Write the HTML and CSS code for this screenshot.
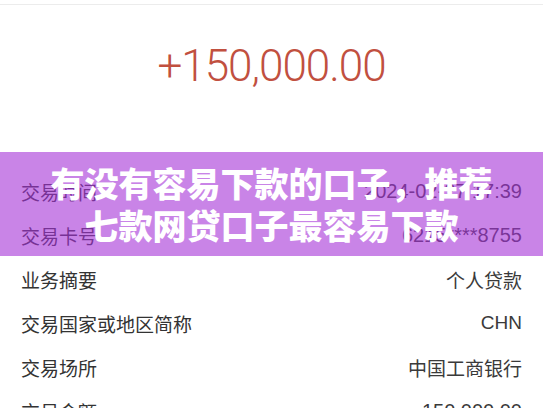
FILE: index.html
```html
<!DOCTYPE html>
<html lang="zh-CN">
<head>
<meta charset="UTF-8">
<meta name="viewport" content="width=device-width, initial-scale=1.0">
<title>交易详情</title>
<link rel="stylesheet" href="styles.css">
</head>
<body>
<div class="page">
  <div class="topbar"></div>

  <div class="amount-box">
    <div class="amount">+150,000.00</div>
  </div>

  <!-- detail rows -->
  <ul class="details">
    <li class="row"><span class="label">交易时间</span><span class="value num">2024-02-27 17:39</span></li>
    <li class="row"><span class="label">交易卡号</span><span class="value num">6215****8755</span></li>
    <li class="row"><span class="label">业务摘要</span><span class="value">个人贷款</span></li>
    <li class="row"><span class="label">交易国家或地区简称</span><span class="value">CHN</span></li>
    <li class="row"><span class="label">交易场所</span><span class="value">中国工商银行</span></li>
    <li class="row"><span class="label">交易金额</span><span class="value num">150,000.00</span></li>
  </ul>

  <div class="banner">
    <h1>有没有容易下款的口子，推荐<br>七款网贷口子最容易下款</h1>
  </div>
</div>
</body>
</html>
```

FILE: styles.css
```css
body {
  margin: 0;
  padding: 0;
  background: #fff;
  color: #333;
  font-family: "Liberation Sans", "Noto Sans CJK SC", sans-serif;
  overflow: hidden;
}
.page {
  position: relative;
  height: 408px;
  overflow: hidden;
}
.topbar {
  height: 4px;
  border-bottom: 1px solid #ececec;
}
.amount-box {
  height: 164px;
  box-sizing: border-box;
  padding-top: 35px;
  text-align: center;
}
.amount {
  font-family: Roboto, "Liberation Sans", sans-serif;
  font-weight: 300;
  font-size: 44px;
  line-height: 52px;
  letter-spacing: -1px;
  color: #c1503f;
}
.details {
  list-style: none;
  margin: 0;
  padding: 0 21px;
}
.row {
  height: 44px;
  display: flex;
  align-items: center;
  justify-content: space-between;
  font-size: 19px;
}
.value {
  color: #3a3a3a;
}
.value.num {
  font-size: 20px;
}
.banner {
  position: absolute;
  top: 152px;
  left: 0;
  right: 0;
  height: 104px;
  display: flex;
  align-items: center;
  justify-content: center;
  background: rgba(165, 50, 215, 0.6);
}
.banner h1 {
  margin: 0;
  font-family: "Noto Sans CJK SC", sans-serif;
  font-weight: 900;
  font-size: 34px;
  line-height: 42px;
  color: #fff;
  text-align: center;
}
```
